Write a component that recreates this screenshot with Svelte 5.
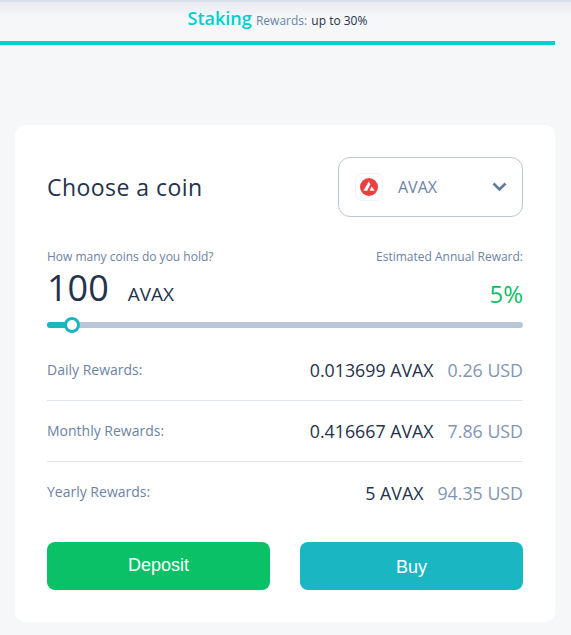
<script>
  const rows = [
    { label: "Daily Rewards:", coin: "0.013699 AVAX", usd: "0.26 USD" },
    { label: "Monthly Rewards:", coin: "0.416667 AVAX", usd: "7.86 USD" },
    { label: "Yearly Rewards:", coin: "5 AVAX", usd: "94.35 USD" }
  ];
</script>

<div class="page">
  <header class="tabs">
    <div class="tab">
      <span class="tab-name">Staking</span>
      <span class="tab-sub">Rewards:</span>
      <span class="tab-val">up to 30%</span>
    </div>
  </header>

  <main class="card">
    <div class="top">
      <h2>Choose a coin</h2>
      <div class="select">
        <span class="logo">
          <svg width="18" height="18" viewBox="0 0 18 18">
            <circle cx="9" cy="9" r="9" fill="#e84142" />
            <path d="M8.8 3.6 10.4 6.2 7.2 12.8H3.4Z" fill="#fff" />
            <path d="M11.6 8.6 14.6 12.8H9.6Z" fill="#fff" />
          </svg>
        </span>
        <span class="coin-name">AVAX</span>
        <svg class="chev" width="15" height="10" viewBox="0 0 15 10">
          <path d="M1.5 1.5 7.5 7.5l6-6" fill="none" stroke="#5f7a9c" stroke-width="2.6" />
        </svg>
      </div>
    </div>

    <div class="amount">
      <div>
        <div class="small">How many coins do you hold?</div>
        <div class="hold"><span class="num">100</span><span class="unit">AVAX</span></div>
      </div>
      <div class="est">
        <div class="small">Estimated Annual Reward:</div>
        <div class="pct">5%</div>
      </div>
    </div>

    <div class="slider">
      <div class="fill"></div>
      <div class="thumb"></div>
    </div>

    <div class="rows">
      {#each rows as r}
        <div class="row">
          <span class="label">{r.label}</span>
          <span class="vals"><span class="coin">{r.coin}</span><span class="usd">{r.usd}</span></span>
        </div>
      {/each}
    </div>

    <div class="btns">
      <button class="deposit">Deposit</button>
      <button class="buy">Buy</button>
    </div>
  </main>
</div>

<style>
  :global(body) {
    margin: 0;
    background: #f5f7f9;
  }
  .page {
    width: 571px;
    height: 635px;
    overflow: hidden;
    font-family: "Open Sans", sans-serif;
    color: #25324b;
  }
  .tabs {
    width: 555px;
    height: 41px;
    border-bottom: 4px solid #00cfd1;
    box-sizing: content-box;
    position: relative;
  }
  .tabs::before {
    content: "";
    position: absolute;
    left: 0;
    top: 0;
    width: 571px;
    height: 18px;
    background: linear-gradient(#e9ebf0, #f5f7f9);
    border-top: 2px solid #d9e0ea;
    box-sizing: border-box;
  }
  .tab {
    position: relative;
    text-align: center;
    padding-top: 6px;
    white-space: nowrap;
    line-height: 24px;
  }
  .tab-name {
    font-size: 18px;
    font-weight: 600;
    color: #00cfd1;
  }
  .tab-sub {
    font-size: 12px;
    color: #6c83a3;
  }
  .tab-val {
    font-size: 12px;
    color: #25324b;
  }
  .card {
    width: 476px;
    height: 497px;
    box-sizing: content-box;
    margin: 80px 0 0 15px;
    padding: 0 32px;
    background: #fff;
    border-radius: 10px;
    display: flex;
    flex-direction: column;
  }
  .top {
    display: flex;
    justify-content: space-between;
    align-items: center;
    padding-top: 32px;
  }
  h2 {
    margin: 0;
    font-size: 23px;
    font-weight: 400;
    letter-spacing: 0.45px;
  }
  .select {
    width: 185px;
    height: 60px;
    box-sizing: border-box;
    border: 1px solid #b9c7d8;
    border-radius: 12px;
    display: flex;
    align-items: center;
    padding: 0 15px 0 16px;
  }
  .logo {
    width: 28px;
    height: 28px;
    box-sizing: border-box;
    border: 1px solid #f1f3f6;
    border-radius: 7px;
    display: flex;
    align-items: center;
    justify-content: center;
  }
  .coin-name {
    margin-left: 15px;
    font-size: 16px;
    color: #6c83a3;
    flex: 1;
  }
  .amount {
    display: flex;
    justify-content: space-between;
    margin-top: 32px;
  }
  .small {
    font-size: 12px;
    line-height: 16px;
    color: #6c83a3;
  }
  .hold {
    display: flex;
    align-items: baseline;
    line-height: 46px;
    height: 46px;
  }
  .num {
    font-size: 36px;
  }
  .unit {
    font-size: 19px;
    margin-left: 19px;
  }
  .est {
    text-align: right;
  }
  .pct {
    font-size: 24px;
    color: #0bbf67;
    line-height: 32px;
    margin-top: 13px;
  }
  .slider {
    position: relative;
    height: 6px;
    margin-top: 11px;
    background: #b9c6d6;
    border-radius: 3px;
  }
  .fill {
    width: 24px;
    height: 6px;
    background: #1ab7c3;
    border-radius: 3px;
  }
  .thumb {
    position: absolute;
    left: 17px;
    top: -5px;
    width: 16px;
    height: 16px;
    box-sizing: border-box;
    background: #fff;
    border: 3px solid #1ab7c3;
    border-radius: 50%;
  }
  .rows {
    margin-top: 12px;
  }
  .row {
    height: 61px;
    box-sizing: border-box;
    display: flex;
    justify-content: space-between;
    align-items: center;
    border-bottom: 1px solid #e1e6ec;
  }
  .row:last-child {
    border-bottom: none;
  }
  .label {
    font-size: 14px;
    color: #6c83a3;
    padding-bottom: 2px;
  }
  .vals {
    display: flex;
    gap: 14px;
    font-size: 17.8px;
  }
  .usd {
    color: #8296b0;
  }
  .btns {
    display: flex;
    justify-content: space-between;
    margin-top: 19px;
  }
  button {
    width: 223px;
    height: 48px;
    border: none;
    border-radius: 8px;
    color: #fff;
    font-family: "Liberation Sans", sans-serif;
    font-size: 18px;
  }
  .deposit {
    background: #0bc167;
    padding-bottom: 3px;
  }
  .buy {
    background: #1ab7c3;
    padding-top: 3px;
  }
</style>
